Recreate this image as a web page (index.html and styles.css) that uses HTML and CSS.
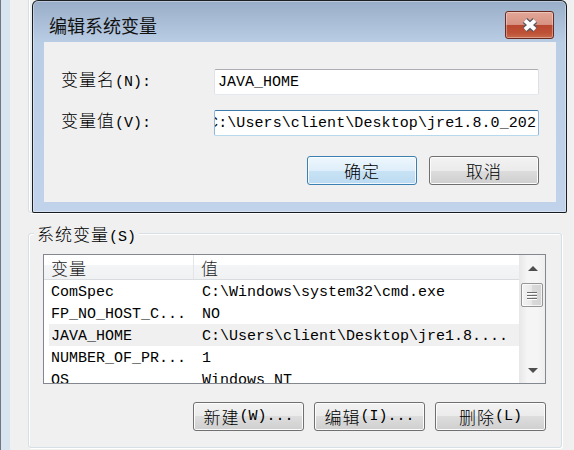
FILE: index.html
```html
<!DOCTYPE html>
<html>
<head>
<meta charset="utf-8">
<link rel="stylesheet" href="styles.css">
</head>
<body>
<div class="desk">
  <div class="parent">
    <div class="frame-left"></div>
    <div class="client">
      <div class="group group-top"></div>
      <div class="group group-sys">
        <div class="legend"><span class="cn">系统变量</span>(S)</div>
        <div class="list">
          <div class="list-main">
            <div class="hdr">
              <div class="c1"><span class="cn">变量</span></div>
              <div class="c2"><span class="cn">值</span></div>
            </div>
            <div class="row"><div class="c1">ComSpec</div><div class="c2">C:\Windows\system32\cmd.exe</div></div>
            <div class="row"><div class="c1">FP_NO_HOST_C...</div><div class="c2">NO</div></div>
            <div class="row sel"><div class="c1">JAVA_HOME</div><div class="c2">C:\Users\client\Desktop\jre1.8....</div></div>
            <div class="row"><div class="c1">NUMBER_OF_PR...</div><div class="c2">1</div></div>
            <div class="row"><div class="c1">OS</div><div class="c2">Windows_NT</div></div>
          </div>
          <div class="vscroll">
            <div class="arrow up"></div>
            <div class="track"><div class="thumb"><i></i><i></i><i></i></div></div>
            <div class="arrow down"></div>
          </div>
        </div>
        <div class="btns">
          <button class="btn"><span class="cn">新建</span>(W)...</button>
          <button class="btn"><span class="cn">编辑</span>(I)...</button>
          <button class="btn"><span class="cn">删除</span>(L)</button>
        </div>
      </div>
    </div>
  </div>

  <div class="dialog">
    <div class="titlebar">
      <div class="title">编辑系统变量</div>
      <div class="close">
        <svg width="18" height="16" viewBox="0 0 18 16">
          <path d="M4 3.5 L14 12.5 M14 3.5 L4 12.5" stroke="#555a60" stroke-width="6.4" fill="none"/>
          <path d="M4 3.5 L14 12.5 M14 3.5 L4 12.5" stroke="#ffffff" stroke-width="4" fill="none"/>
        </svg>
      </div>
    </div>
    <div class="content">
      <div class="field">
        <label class="lbl"><span class="cn">变量名</span>(N):</label>
        <div class="input">JAVA_HOME</div>
      </div>
      <div class="field">
        <label class="lbl"><span class="cn">变量值</span>(V):</label>
        <div class="input focus"><span class="val">C:\Users\client\Desktop\jre1.8.0_202</span></div>
      </div>
      <div class="dlg-btns">
        <button class="btn btn-default"><span class="cn">确定</span></button>
        <button class="btn btn-dlg"><span class="cn">取消</span></button>
      </div>
    </div>
  </div>
</div>
</body>
</html>
```
FILE: styles.css
```css
* { box-sizing: border-box; }
html, body { margin: 0; padding: 0; }
body {
  width: 574px;
  height: 450px;
  overflow: hidden;
  background: #f0f0f0;
  font-family: "Liberation Mono", "Noto Sans CJK SC", monospace;
  font-size: 15px;
  color: #000;
}
.cn {
  font-family: "Noto Sans CJK SC", sans-serif;
  font-size: 17px;
  font-weight: 300;
  letter-spacing: 1px;
}
.desk { position: relative; width: 574px; height: 450px; }

/* parent window */
.parent { display: flex; height: 450px; }
.frame-left {
  width: 10px;
  background: #d9e4f1;
  border-left: 1px solid #70767d;
}
.client { flex: 1; padding: 0 12px 0 18px; background: #f0f0f0; }
.group {
  border: 1px solid #d5dfe5;
  border-radius: 3px;
  box-shadow: inset 1px 1px 0 #ffffff, 1px 1px 0 #ffffff;
}
.group-top { height: 223px; margin-top: -10px; }
.group-sys {
  position: relative;
  margin-top: 20px;
  padding: 20px 15px 16px 14px;
}
.legend {
  position: absolute;
  left: 5px;
  top: -11px;
  padding: 0 3px;
  background: #f0f0f0;
  line-height: 22px;
  white-space: nowrap;
}

/* list view */
.list {
  display: flex;
  height: 130px;
  border: 1px solid #828790;
  background: #ffffff;
}
.list-main { flex: 1; overflow: hidden; }
.hdr {
  display: flex;
  height: 25px;
  line-height: 25px;
  border-bottom: 1px solid #d8dbe0;
  background: linear-gradient(#ffffff 0, #ffffff 40%, #f4f5f7 40%, #f0f1f3 100%);
  color: #1e1e1e;
}
.hdr .c1 { width: 150px; padding-left: 7px; border-right: 1px solid #e3e5e8; }
.hdr .c2 { padding-left: 7px; }
.row {
  display: flex;
  height: 22px;
  line-height: 22px;
  padding-top: 2px;
  margin-left: 5px;
  white-space: nowrap;
}
.row.sel { background: #f0f0f0; }
.row .c1 { width: 145px; padding-left: 2px; overflow: hidden; }
.row .c2 { padding-left: 8px; }

/* scrollbar */
.vscroll {
  width: 26px;
  display: flex;
  flex-direction: column;
  border-left: 1px solid #e8e8e8;
  background: linear-gradient(to right, #e9e9e9, #f5f5f5 30%, #f5f5f5 70%, #eeeeee);
}
.arrow {
  height: 26px;
  display: flex;
  align-items: center;
  justify-content: center;
}
.arrow::before {
  content: "";
  border-left: 5px solid transparent;
  border-right: 5px solid transparent;
}
.arrow.up::before { border-bottom: 5px solid #4e4e4e; }
.arrow.down::before { border-top: 5px solid #4e4e4e; }
.track { flex: 1; padding: 2px 2px 0 1px; }
.thumb {
  height: 24px;
  border: 1px solid #959595;
  border-radius: 2px;
  background: linear-gradient(to right, #f3f3f3, #e8e8e8 50%, #dadada 50%, #d4d4d4);
  box-shadow: inset 0 0 0 1px rgba(255,255,255,.7);
  display: flex;
  flex-direction: column;
  align-items: center;
  justify-content: center;
  gap: 2px;
}
.thumb i {
  display: block;
  width: 10px;
  height: 1px;
  background: #6a6a6a;
  box-shadow: 0 1px 0 #ffffff;
}

/* buttons */
.btns {
  display: flex;
  justify-content: flex-end;
  gap: 10px;
  margin-top: 18px;
}
.btn {
  width: 111px;
  height: 29px;
  padding: 0;
  border: 1px solid #707070;
  border-radius: 3px;
  background: linear-gradient(#f2f2f2 0, #ebebeb 50%, #dddddd 50%, #cfcfcf 100%);
  box-shadow: inset 0 0 0 1px #fcfcfc;
  font: inherit;
  color: #000;
  display: flex;
  align-items: center;
  justify-content: center;
  white-space: nowrap;
}

/* dialog */
.dialog {
  position: absolute;
  left: 32px;
  top: 0;
  width: 535px;
  height: 213px;
  border: 1px solid rgba(0,0,0,.85);
  border-radius: 6px 6px 2px 2px;
  padding: 0 10px 10px 11px;
  background: linear-gradient(#98adc7 0, #a9bdd6 20px, #b9cde5 42px, #c0d3ea 100%);
  box-shadow: inset 0 0 0 1px rgba(255,255,255,.35);
  display: flex;
  flex-direction: column;
}
.titlebar {
  height: 41px;
  display: flex;
  justify-content: space-between;
  align-items: flex-start;
}
.title {
  margin: 12px 0 0 5px;
  font-family: "Noto Sans CJK SC", sans-serif;
  font-size: 18px;
  line-height: 24px;
  color: #111;
}
.close {
  margin: 10px 2px 0 0;
  width: 49px;
  height: 28px;
  border: 1px solid #6b2a20;
  border-radius: 3px;
  background: linear-gradient(#e2a797 0, #d79283 48%, #b8472f 50%, #bd5136 80%, #c9694c 100%);
  box-shadow: inset 0 0 0 1px rgba(255,255,255,.35);
  display: flex;
  align-items: center;
  justify-content: center;
}
.close svg { overflow: visible; }
.content {
  flex: 1;
  background: #f0f0f0;
  padding: 27px 17px 17px;
  display: flex;
  flex-direction: column;
  gap: 15px;
}
.field { display: flex; align-items: center; height: 26px; }
.lbl { flex: 1; white-space: nowrap; line-height: 24px; padding-bottom: 2px; }
.input {
  width: 325px;
  height: 26px;
  border: 1px solid;
  border-color: #abadb3 #dbdfe6 #e3e9ef #e2e3ea;
  border-radius: 2px;
  background: #ffffff;
  padding: 1px 2px 0 3px;
  line-height: 24px;
  overflow: hidden;
  white-space: nowrap;
}
.input.focus {
  border-color: #3d7bad #8fb8de #b7d9ed #8fb8de;
  display: flex;
  justify-content: flex-end;
}
.val { flex-shrink: 0; letter-spacing: 0.08px; }
.dlg-btns {
  display: flex;
  justify-content: flex-end;
  gap: 12px;
  margin-top: 5px;
}
.dlg-btns .btn { width: 110px; }
.btn-default {
  border-color: #3c7fb1;
  background: linear-gradient(#eef7fd 0, #deeefa 50%, #c9e3f5 50%, #bbdaf1 100%);
  box-shadow: inset 0 0 0 1px rgba(255,255,255,.8);
}
```
